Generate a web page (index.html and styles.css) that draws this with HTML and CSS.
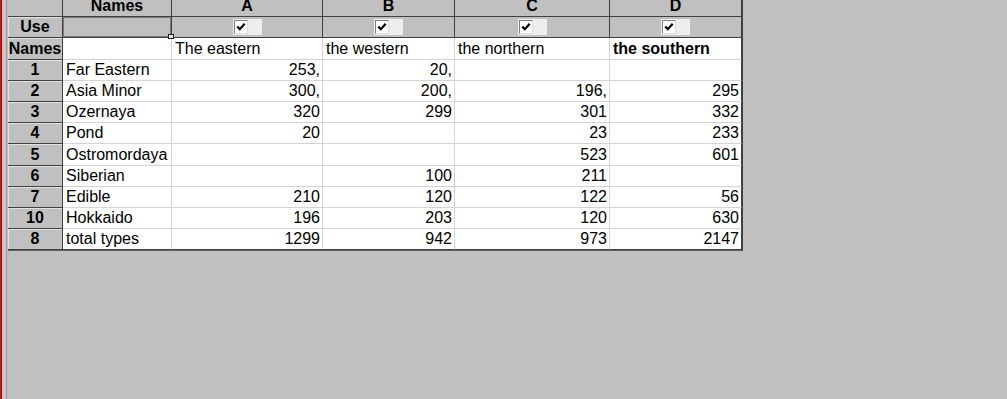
FILE: index.html
```html
<!DOCTYPE html>
<html>
<head>
<meta charset="utf-8">
<link rel="stylesheet" href="styles.css">
</head>
<body>
<div class="frame"></div>
<div class="sheet">
  <div class="grid">
    <!-- header row -->
    <div class="fx hd"></div>
    <div class="fx hd">Names</div>
    <div class="fx hd">A</div>
    <div class="fx hd">B</div>
    <div class="fx hd">C</div>
    <div class="fx hd last">D</div>
    <!-- use row -->
    <div class="fx rh use-row">Use</div>
    <div class="fx use focus"></div>
    <div class="fx use"><span class="cb"><span class="box"><svg width="10" height="10" viewBox="0 0 10 10"><path d="M1.3 4.6 L3.8 7.2 L8.7 1.8" fill="none" stroke="#000" stroke-width="2.2"/></svg></span></span></div>
    <div class="fx use"><span class="cb"><span class="box"><svg width="10" height="10" viewBox="0 0 10 10"><path d="M1.3 4.6 L3.8 7.2 L8.7 1.8" fill="none" stroke="#000" stroke-width="2.2"/></svg></span></span></div>
    <div class="fx use"><span class="cb"><span class="box"><svg width="10" height="10" viewBox="0 0 10 10"><path d="M1.3 4.6 L3.8 7.2 L8.7 1.8" fill="none" stroke="#000" stroke-width="2.2"/></svg></span></span></div>
    <div class="fx use last"><span class="cb"><span class="box"><svg width="10" height="10" viewBox="0 0 10 10"><path d="M1.3 4.6 L3.8 7.2 L8.7 1.8" fill="none" stroke="#000" stroke-width="2.2"/></svg></span></span></div>
    <!-- names row -->
    <div class="fx rh nm">Names</div>
    <div class="c nm"></div>
    <div class="c nm">The eastern</div>
    <div class="c nm">the western</div>
    <div class="c nm">the northern</div>
    <div class="c nm b last">the southern</div>
    <!-- data -->
    <div class="fx rh">1</div><div class="c">Far Eastern</div><div class="c r">253,</div><div class="c r">20,</div><div class="c r"></div><div class="c r last"></div>
    <div class="fx rh">2</div><div class="c">Asia Minor</div><div class="c r">300,</div><div class="c r">200,</div><div class="c r">196,</div><div class="c r last">295</div>
    <div class="fx rh">3</div><div class="c">Ozernaya</div><div class="c r">320</div><div class="c r">299</div><div class="c r">301</div><div class="c r last">332</div>
    <div class="fx rh">4</div><div class="c">Pond</div><div class="c r">20</div><div class="c r"></div><div class="c r">23</div><div class="c r last">233</div>
    <div class="fx rh tall">5</div><div class="c tall">Ostromordaya</div><div class="c r tall"></div><div class="c r tall"></div><div class="c r tall">523</div><div class="c r tall last">601</div>
    <div class="fx rh">6</div><div class="c">Siberian</div><div class="c r"></div><div class="c r">100</div><div class="c r">211</div><div class="c r last"></div>
    <div class="fx rh">7</div><div class="c">Edible</div><div class="c r">210</div><div class="c r">120</div><div class="c r">122</div><div class="c r last">56</div>
    <div class="fx rh">10</div><div class="c">Hokkaido</div><div class="c r">196</div><div class="c r">203</div><div class="c r">120</div><div class="c r last">630</div>
    <div class="fx rh bot">8</div><div class="c bot">total types</div><div class="c r bot">1299</div><div class="c r bot">942</div><div class="c r bot">973</div><div class="c r bot last">2147</div>
    <div class="handle"></div>
  </div>
</div>
</body>
</html>
```

FILE: styles.css
```css
html, body {
  margin: 0;
  padding: 0;
}
body {
  width: 1007px;
  height: 399px;
  overflow: hidden;
  background: #c0c0c0;
  display: flex;
  align-items: flex-start;
  font-family: "Liberation Sans", Arial, sans-serif;
  font-size: 16px;
  color: #000;
}
.frame {
  width: 8px;
  height: 399px;
  flex: none;
  background: linear-gradient(to right, #d81818 0, #d81818 1px, #8a1010 1px, #8a1010 2px, #c8c8c8 2px, #c8c8c8 6px, #9a9a9a 6px, #9a9a9a 7px, #c0c0c0 7px);
}
.sheet {
  flex: none;
}
.grid {
  position: relative;
  display: grid;
  grid-template-columns: 55px 109px 151px 132px 155px 132px;
  grid-template-rows: 17px 21px 22px 21px 21px 21px 21px 22px 21px 21px 21px 21px;
  border-right: 1px solid #404040;
  border-bottom: 1px solid #606060;
}
.grid > div {
  box-sizing: border-box;
  white-space: nowrap;
  overflow: hidden;
}
.fx {
  background: #c0c0c0;
  border-right: 1px solid #404040;
  border-bottom: 1px solid #404040;
  font-weight: bold;
  text-align: center;
  line-height: 20px;
  box-shadow: inset 1px 1px 0 #e2e2e2;
}
.grid > .hd {
  line-height: 12px;
  box-shadow: none;
  overflow: visible;
}
.c {
  background: #fff;
  border-right: 1px solid #d4d4d4;
  border-bottom: 1px solid #d4d4d4;
  line-height: 20px;
  padding: 0 2px 0 3px;
}
.nm {
  line-height: 21px;
}
.tall {
  line-height: 21px;
}
.r {
  text-align: right;
}
.b {
  font-weight: bold;
}
.last {
  border-right-color: #404040;
}
.bot {
  border-bottom-color: #404040;
}
.use {
  display: flex;
  align-items: center;
  justify-content: center;
  box-shadow: none;
}
.focus {
  box-shadow: inset 0 0 0 1px #7a7a7a;
}
.cb {
  display: flex;
  align-items: center;
  width: 29px;
  height: 16px;
  background: #eeeeee;
  padding-left: 1px;
  box-sizing: border-box;
}
.box {
  display: flex;
  align-items: center;
  justify-content: center;
  width: 14px;
  height: 14px;
  box-sizing: border-box;
  background: #fff;
  border-top: 1px solid #808080;
  border-left: 1px solid #808080;
  border-right: 1px solid #dcdcdc;
  border-bottom: 1px solid #dcdcdc;
}
.box svg {
  display: block;
}
.handle {
  position: absolute;
  left: 160px;
  top: 34px;
  width: 6px;
  height: 5px;
  box-sizing: border-box;
  background: #e8e8e8;
  border: 1px solid #202020;
}
```
